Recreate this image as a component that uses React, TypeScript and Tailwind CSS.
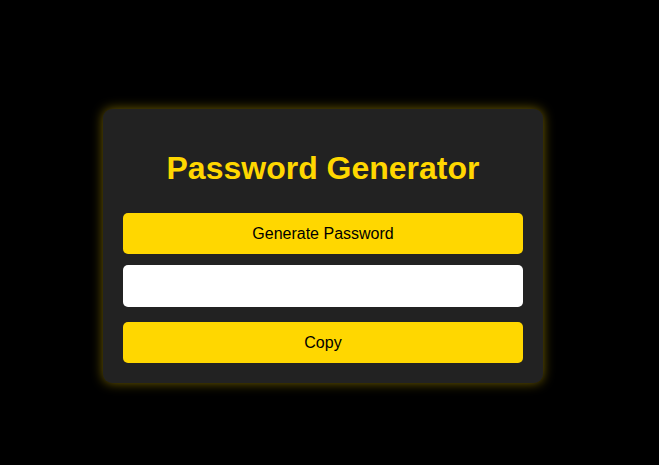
import { useState } from 'react';

const chars = 'ABCDEFGHIJKLMNOPQRSTUVWXYZabcdefghijklmnopqrstuvwxyz0123456789!@#$%^&*';

const App = () => {
  const [password, setPassword] = useState<string>('');

  const generate = () => {
    let out = '';
    for (let i = 0; i < 12; i++) {
      out += chars[Math.floor(Math.random() * chars.length)];
    }
    setPassword(out);
  };

  const copy = () => {
    navigator.clipboard?.writeText(password);
  };

  return (
    <div
      className="w-full h-[465px] bg-black pl-[103px] pt-[109px]"
      style={{ fontFamily: '"Liberation Sans", Arial, sans-serif' }}
    >
      <div className="w-[440px] h-[274px] bg-[#222222] rounded-[9px] px-5 pt-[41px] shadow-[0_0_12px_rgba(255,215,0,0.45)]">
        <h1 className="text-[32px] leading-[37px] font-bold text-[#FFD700] text-center">
          Password Generator
        </h1>
        <button
          className="mt-[26px] w-full h-[41px] rounded-[5px] bg-[#FFD700] text-black text-base"
          onClick={generate}
        >
          Generate Password
        </button>
        <input
          type="text"
          readOnly
          value={password}
          className="mt-[11px] block w-full h-[42px] rounded-[5px] bg-white outline-none px-3 text-base text-black"
        />
        <button
          className="mt-[15px] w-full h-[41px] rounded-[5px] bg-[#FFD700] text-black text-base"
          onClick={copy}
        >
          Copy
        </button>
      </div>
    </div>
  );
};

export default App;
